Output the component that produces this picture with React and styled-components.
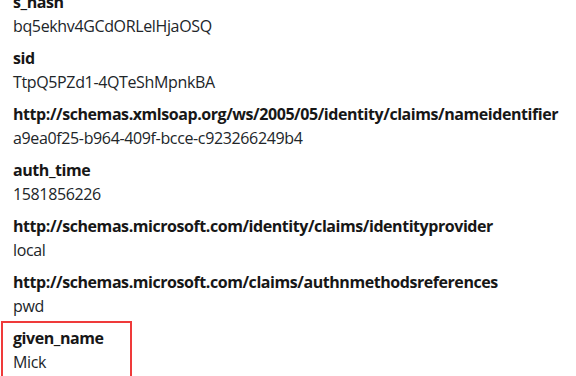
import React from "react";
import styled, { createGlobalStyle } from "styled-components";

const GlobalStyle = createGlobalStyle`
  html, body {
    margin: 0;
    padding: 0;
    background: #ffffff;
    overflow: hidden;
  }
  body {
    font-family: "Open Sans", "Liberation Sans", sans-serif;
    font-size: 16px;
    line-height: 24px;
    color: #212529;
  }
`;

const Page = styled.div`
  width: 576px;
  height: 376px;
  overflow: hidden;
  padding-left: 13px;
  box-sizing: border-box;
`;

const ClaimList = styled.dl`
  margin: -10px 0 0 0;
  padding: 0;
`;

const Claim = styled.div`
  ${(p) =>
    p.$highlight &&
    `
    margin: -5px 0 0 -12px;
    padding: 3px 0 6px 10px;
    width: 117px;
    border: 2px solid #ef3a3a;
  `}
`;

const ClaimName = styled.dt`
  font-weight: 700;
  color: #171717;
  letter-spacing: -0.44px;
  white-space: nowrap;
`;

const ClaimValue = styled.dd`
  margin: 0 0 8px 0;
  color: #212529;
  letter-spacing: -0.36px;
  white-space: nowrap;
`;

const claims = [
  ["s_hash", "bq5ekhv4GCdORLelHjaOSQ"],
  ["sid", "TtpQ5PZd1-4QTeShMpnkBA"],
  [
    "http://schemas.xmlsoap.org/ws/2005/05/identity/claims/nameidentifier",
    "a9ea0f25-b964-409f-bcce-c923266249b4",
  ],
  ["auth_time", "1581856226"],
  ["http://schemas.microsoft.com/identity/claims/identityprovider", "local"],
  ["http://schemas.microsoft.com/claims/authnmethodsreferences", "pwd"],
  ["given_name", "Mick", true],
];

export default function App() {
  return (
    <>
      <GlobalStyle />
      <Page>
        <ClaimList>
          {claims.map(([name, value, hl]) => (
            <Claim key={name} $highlight={hl}>
              <ClaimName>{name}</ClaimName>
              <ClaimValue>{value}</ClaimValue>
            </Claim>
          ))}
        </ClaimList>
      </Page>
    </>
  );
}
